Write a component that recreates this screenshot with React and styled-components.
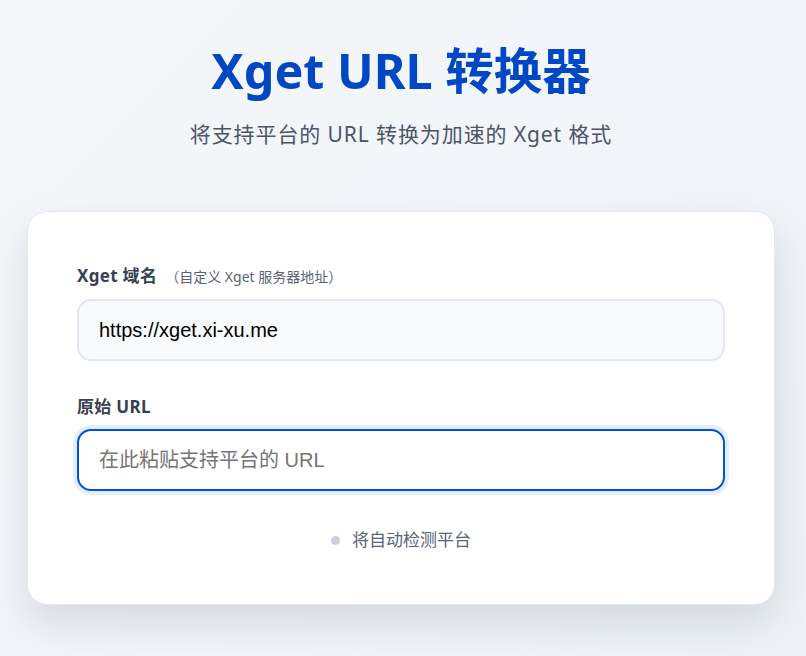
import React, { useState } from 'react';
import styled, { createGlobalStyle } from 'styled-components';

const GlobalStyle = createGlobalStyle`
  body {
    margin: 0;
    background: linear-gradient(135deg, #f5f7fa 0%, #eef2f7 100%);
    min-height: 100vh;
    font-family: "Noto Sans", "Noto Sans CJK SC", sans-serif;
  }
`;

const Page = styled.div`
  padding: 36px 31px 40px 27px;
`;

const Header = styled.header`
  text-align: center;
  margin-bottom: 63px;
`;

const Title = styled.h1`
  margin: 0;
  font-size: 48.5px;
  line-height: 68px;
  font-weight: 700;
  color: #0047c4;
`;

const Subtitle = styled.p`
  margin: 16px 0 0;
  font-size: 21px;
  line-height: 28px;
  letter-spacing: 0.9px;
  color: #4a5568;
`;

const Card = styled.div`
  background: #fff;
  border: 1px solid #e2e8f0;
  border-radius: 20px;
  padding: 53px 49px 52px;
  box-shadow: 0 18px 40px rgba(15, 23, 42, 0.12);
`;

const Field = styled.div`
  & + & {
    margin-top: 35px;
  }
`;

const Label = styled.label`
  display: flex;
  align-items: baseline;
  font-size: 17px;
  line-height: 22px;
  font-weight: 700;
  letter-spacing: 0.3px;
  color: #374151;
  margin-bottom: 11px;
`;

const Hint = styled.span`
  margin-left: 8px;
  font-size: 14px;
  font-weight: 400;
  letter-spacing: 0;
  color: #5b6472;
`;

const Input = styled.input`
  display: block;
  width: 100%;
  box-sizing: border-box;
  height: 62px;
  padding: 0 20px;
  font-family: "Liberation Sans", "Noto Sans CJK SC", sans-serif;
  font-size: 20px;
  color: #000;
  border-radius: 14px;
  outline: none;
  border: 2px solid ${(p) => (p.focused ? '#0052d6' : '#e2e8f0')};
  background: ${(p) => (p.focused ? '#fff' : '#f8fafc')};
  box-shadow: ${(p) => (p.focused ? '0 0 0 4px rgba(0, 82, 214, 0.1)' : 'none')};

  &::placeholder {
    color: #757575;
  }
`;

const Status = styled.div`
  display: flex;
  justify-content: center;
  align-items: center;
  gap: 12px;
  margin-top: 37px;
  font-size: 17px;
  line-height: 24px;
  color: #5a6476;
`;

const Dot = styled.span`
  width: 9px;
  height: 9px;
  border-radius: 50%;
  background: #cbd1dc;
`;

export default function App() {
  const [domain, setDomain] = useState('https://xget.xi-xu.me');
  const [url, setUrl] = useState('');

  return (
    <Page>
      <GlobalStyle />
      <Header>
        <Title>Xget URL 转换器</Title>
        <Subtitle>将支持平台的 URL 转换为加速的 Xget 格式</Subtitle>
      </Header>
      <Card>
        <Field>
          <Label>
            Xget 域名<Hint>（自定义 Xget 服务器地址）</Hint>
          </Label>
          <Input value={domain} onChange={(e) => setDomain(e.target.value)} />
        </Field>
        <Field>
          <Label>原始 URL</Label>
          <Input
            focused
            value={url}
            onChange={(e) => setUrl(e.target.value)}
            placeholder="在此粘贴支持平台的 URL"
          />
        </Field>
        <Status>
          <Dot />
          将自动检测平台
        </Status>
      </Card>
    </Page>
  );
}
